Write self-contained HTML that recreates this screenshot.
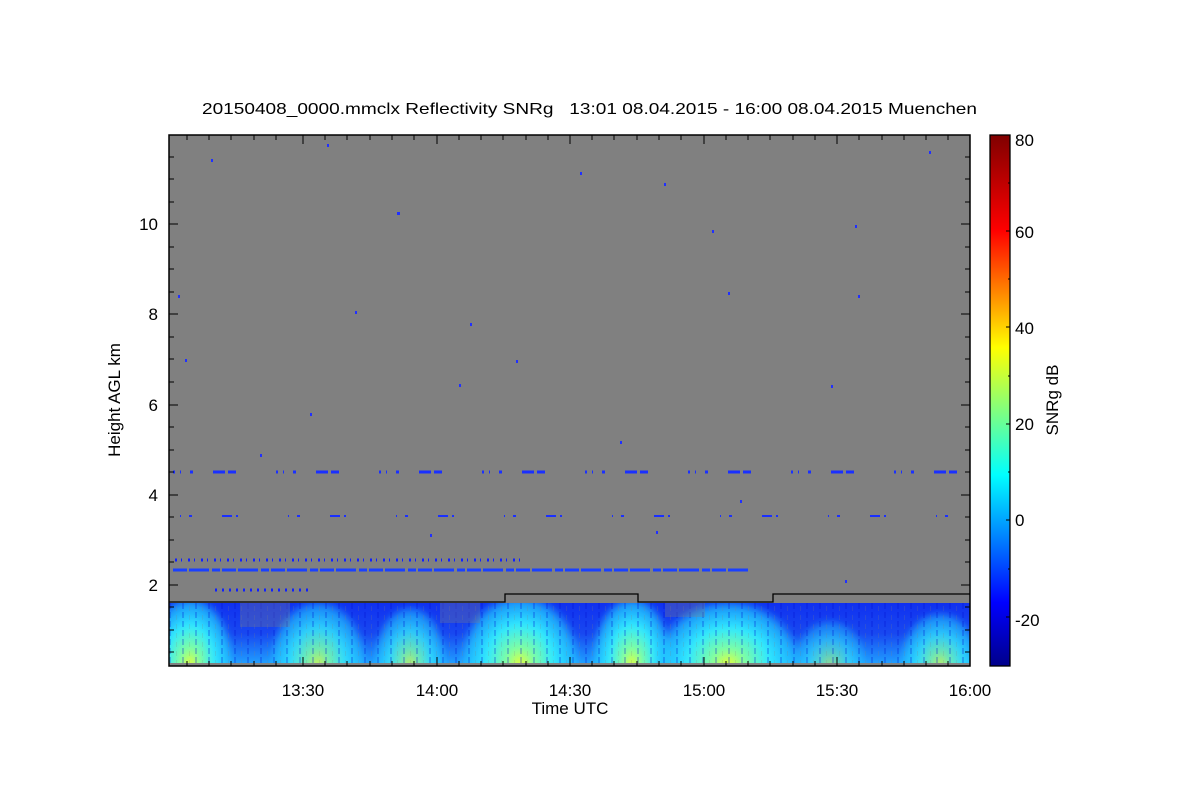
<!DOCTYPE html>
<html><head><meta charset="utf-8"><style>
html,body{margin:0;padding:0;background:#fff;}
svg text{font-family:"Liberation Sans",sans-serif;fill:#000;}
</style></head><body>
<svg width="1200" height="800" viewBox="0 0 1200 800" xmlns="http://www.w3.org/2000/svg">
<defs>
<linearGradient id="jet" x1="0" y1="1" x2="0" y2="0">
<stop offset="0" stop-color="#00008a"/>
<stop offset="0.12" stop-color="#0000ff"/>
<stop offset="0.36" stop-color="#00ffff"/>
<stop offset="0.6" stop-color="#ffff00"/>
<stop offset="0.82" stop-color="#ff0000"/>
<stop offset="1" stop-color="#800000"/>
</linearGradient>
<linearGradient id="band" x1="0" y1="0" x2="0" y2="1">
<stop offset="0" stop-color="#1030f0"/>
<stop offset="0.5" stop-color="#1848f0"/>
<stop offset="1" stop-color="#20a0ff"/>
</linearGradient>
<radialGradient id="blob" cx="0.5" cy="0.5" r="0.5">
<stop offset="0" stop-color="#e8ff30"/>
<stop offset="0.22" stop-color="#80ffa0"/>
<stop offset="0.55" stop-color="#30e8ff"/>
<stop offset="0.85" stop-color="#20c8ff" stop-opacity="0.7"/>
<stop offset="1" stop-color="#20b0ff" stop-opacity="0"/>
</radialGradient>
<clipPath id="bc"><rect x="169" y="603" width="801" height="61"/></clipPath>
<filter id="bl"><feGaussianBlur stdDeviation="3"/></filter>
<pattern id="noise" width="13" height="9" patternUnits="userSpaceOnUse">
<rect x="0" y="0" width="2" height="6" fill="#0010d0" opacity="0.5"/>
<rect x="7" y="3" width="1" height="5" fill="#808080" opacity="0.4"/>
</pattern>
</defs>
<text x="202" y="114" font-size="16" textLength="775" lengthAdjust="spacingAndGlyphs" xml:space="preserve">20150408_0000.mmclx Reflectivity SNRg   13:01 08.04.2015 - 16:00 08.04.2015 Muenchen</text>
<rect x="169" y="135" width="801" height="531" fill="#808080"/>
<g clip-path="url(#bc)">
<rect x="169" y="603" width="801" height="61" fill="url(#band)"/>
<g filter="url(#bl)">
<ellipse cx="190" cy="664" rx="45" ry="70" fill="url(#blob)"/>
<ellipse cx="318" cy="664" rx="50" ry="66" fill="url(#blob)" opacity="0.85"/>
<ellipse cx="410" cy="664" rx="38" ry="60" fill="url(#blob)" opacity="0.8"/>
<ellipse cx="520" cy="664" rx="62" ry="72" fill="url(#blob)"/>
<ellipse cx="632" cy="664" rx="42" ry="70" fill="url(#blob)"/>
<ellipse cx="728" cy="664" rx="75" ry="66" fill="url(#blob)"/>
<ellipse cx="830" cy="664" rx="38" ry="46" fill="url(#blob)" opacity="0.6"/>
<ellipse cx="940" cy="664" rx="42" ry="54" fill="url(#blob)" opacity="0.8"/>
</g>
<rect x="169" y="603" width="801" height="61" fill="url(#noise)" opacity="0.5"/>
<rect x="240" y="603" width="50" height="24" fill="#808080" opacity="0.3"/>
<rect x="440" y="603" width="40" height="20" fill="#808080" opacity="0.3"/>
<rect x="665" y="603" width="40" height="14" fill="#808080" opacity="0.3"/>
</g>
<rect x="169" y="663" width="801" height="3" fill="#808080"/>
<line x1="173" y1="570" x2="748" y2="570" stroke="#1a40ff" stroke-width="3" stroke-dasharray="14 2 20 3 8 2"/>
<line x1="175" y1="560" x2="520" y2="560" stroke="#1020ff" stroke-width="3" stroke-dasharray="2 4 1 6"/>
<line x1="215" y1="590" x2="310" y2="590" stroke="#1020ff" stroke-width="3" stroke-dasharray="2 5"/>
<line x1="173" y1="472" x2="960" y2="472" stroke="#1a30ff" stroke-width="3" stroke-dasharray="2 5 1 9 3 20 12 3 8 40"/>
<line x1="180" y1="516" x2="958" y2="516" stroke="#1a30ff" stroke-width="2" stroke-dasharray="1 8 3 30 10 4 2 50"/>
<path d="M169 602 H505 V594 H638 V602 H773 V594 H970" fill="none" stroke="#000" stroke-width="1.3"/>
<g fill="#2030ff">
<rect x="211" y="159" width="2" height="3"/><rect x="327" y="144" width="2" height="3"/><rect x="397" y="212" width="3" height="3"/><rect x="178" y="295" width="2" height="3"/><rect x="355" y="311" width="2" height="3"/><rect x="470" y="323" width="2" height="3"/><rect x="580" y="172" width="2" height="3"/><rect x="664" y="183" width="2" height="3"/><rect x="712" y="230" width="2" height="3"/><rect x="728" y="292" width="2" height="3"/><rect x="858" y="295" width="2" height="3"/><rect x="929" y="151" width="2" height="3"/><rect x="459" y="384" width="2" height="3"/><rect x="310" y="413" width="2" height="3"/><rect x="620" y="441" width="2" height="3"/><rect x="831" y="385" width="2" height="3"/><rect x="185" y="359" width="2" height="3"/><rect x="855" y="225" width="2" height="3"/><rect x="516" y="360" width="2" height="3"/><rect x="260" y="454" width="2" height="3"/><rect x="740" y="500" width="2" height="3"/><rect x="430" y="534" width="2" height="3"/><rect x="656" y="531" width="2" height="3"/><rect x="845" y="580" width="2" height="3"/>
</g>
<rect x="169" y="135" width="801" height="531" fill="none" stroke="#000" stroke-width="1.5"/>
<g stroke="#000" stroke-width="1">
<path d="M169 585h9M169 495h9M169 405h9M169 314h9M169 224h9M970 585h-9M970 495h-9M970 405h-9M970 314h-9M970 224h-9"/>
<path d="M169 652h5M169 630h5M169 607h5M169 562h5M169 540h5M169 517h5M169 472h5M169 450h5M169 427h5M169 382h5M169 359h5M169 337h5M169 292h5M169 269h5M169 247h5M169 202h5M169 179h5M169 157h5"/>
<path d="M970 652h-5M970 630h-5M970 607h-5M970 562h-5M970 540h-5M970 517h-5M970 472h-5M970 450h-5M970 427h-5M970 382h-5M970 359h-5M970 337h-5M970 292h-5M970 269h-5M970 247h-5M970 202h-5M970 179h-5M970 157h-5"/>
<path d="M303 666v-9M437 666v-9M570 666v-9M704 666v-9M837 666v-9M303 135v9M437 135v9M570 135v9M704 135v9M837 135v9"/>
<path d="M187 666v-5M209 666v-5M231 666v-5M254 666v-5M276 666v-5M325 666v-5M347 666v-5M370 666v-5M392 666v-5M414 666v-5M459 666v-5M481 666v-5M503 666v-5M526 666v-5M548 666v-5M592 666v-5M614 666v-5M637 666v-5M659 666v-5M681 666v-5M726 666v-5M748 666v-5M770 666v-5M793 666v-5M815 666v-5M859 666v-5M882 666v-5M904 666v-5M926 666v-5M948 666v-5"/>
<path d="M187 135v5M209 135v5M231 135v5M254 135v5M276 135v5M325 135v5M347 135v5M370 135v5M392 135v5M414 135v5M459 135v5M481 135v5M503 135v5M526 135v5M548 135v5M592 135v5M614 135v5M637 135v5M659 135v5M681 135v5M726 135v5M748 135v5M770 135v5M793 135v5M815 135v5M859 135v5M882 135v5M904 135v5M926 135v5M948 135v5"/>
</g>
<g font-size="17" text-anchor="end">
<text x="158" y="591">2</text><text x="158" y="501">4</text><text x="158" y="411">6</text><text x="158" y="320">8</text><text x="158" y="230">10</text>
</g>
<g font-size="17" text-anchor="middle">
<text x="303" y="696">13:30</text><text x="437" y="696">14:00</text><text x="570" y="696">14:30</text><text x="704" y="696">15:00</text><text x="837" y="696">15:30</text><text x="970" y="696">16:00</text>
<text x="570" y="714">Time UTC</text>
<text x="0" y="0" transform="translate(120,400) rotate(-90)">Height AGL km</text>
<text x="0" y="0" transform="translate(1058,400) rotate(-90)">SNRg dB</text>
</g>
<rect x="990" y="135" width="20" height="531" fill="url(#jet)" stroke="#000" stroke-width="1.3"/>
<g stroke="#000"><path d="M1010 231h-4M1010 327h-4M1010 424h-4M1010 520h-4M1010 617h-4M1010 183h-2M1010 279h-2M1010 376h-2M1010 472h-2M1010 569h-2"/></g>
<g font-size="17">
<text x="1015" y="146">80</text><text x="1015" y="238">60</text><text x="1015" y="334">40</text><text x="1015" y="430">20</text><text x="1015" y="526">0</text><text x="1015" y="626">-20</text>
</g>
</svg>
</body></html>
